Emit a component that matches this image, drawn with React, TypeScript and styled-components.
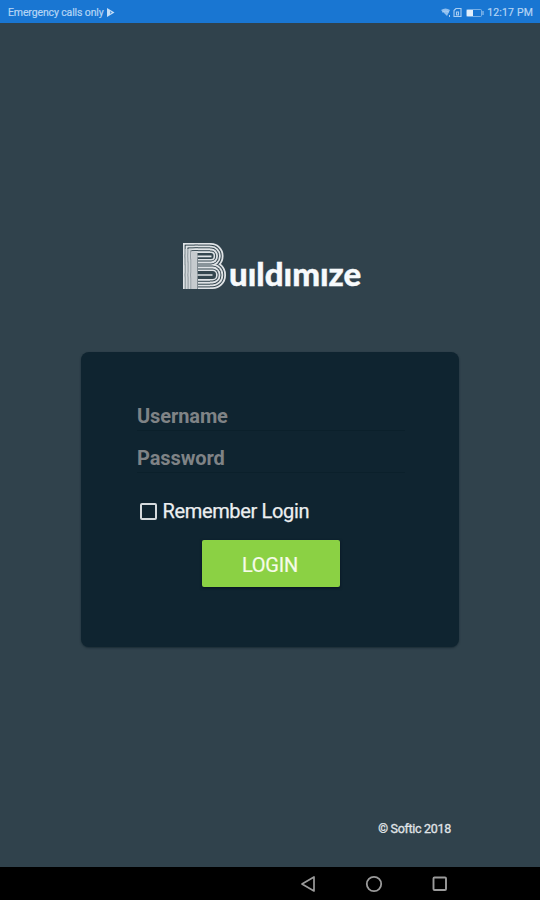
import React, { useState } from 'react';
import styled, { createGlobalStyle } from 'styled-components';

const GlobalStyle = createGlobalStyle`
  * { box-sizing: border-box; }
  body { margin: 0; background: #30424c; font-family: Roboto, sans-serif; }
`;

const Screen = styled.div`
  width: 540px;
  height: 900px;
  display: flex;
  flex-direction: column;
  background: #30424c;
  overflow: hidden;
`;

const StatusBar = styled.header`
  height: 23px;
  flex: none;
  display: flex;
  align-items: center;
  justify-content: space-between;
  padding: 2px 7px 0 8px;
  background: #1976d2;
  color: #b5d5f5;
  font-size: 10.5px;
`;

const StatusGroup = styled.div<{ $gap: number }>`
  display: flex;
  align-items: center;
  gap: ${(p) => p.$gap}px;
  white-space: nowrap;
`;

const StatusText = styled.span<{ $spacing: number }>`
  letter-spacing: ${(p) => p.$spacing}px;
  -webkit-text-stroke: 0.2px currentColor;
`;

const Main = styled.main`
  flex: 1;
  display: flex;
  flex-direction: column;
`;

const Logo = styled.div`
  display: flex;
  align-items: flex-start;
  height: 54px;
  margin: 218px 0 0 181px;
`;

const LogoText = styled.span`
  margin: 12px 0 0 3px;
  font: 900 33px/40px Lato, sans-serif;
  letter-spacing: 0;
  color: #f7fafc;
  -webkit-text-stroke: 0.4px #f7fafc;
`;

const Card = styled.form`
  width: 378px;
  height: 295px;
  margin: 57px 0 0 81px;
  padding: 43px 55px 0 56px;
  display: flex;
  flex-direction: column;
  border-radius: 8px;
  background: #0f2430;
  box-shadow: 0 1px 2px rgba(10, 28, 38, 0.6);
`;

const Field = styled.input`
  width: 268px;
  height: 36px;
  margin-bottom: 6px;
  padding: 8px 0 2px;
  border: 0;
  border-bottom: 1px solid #0b202b;
  outline: 0;
  background: transparent;
  color: #ffffff;
  font: 700 20px/24px Roboto, sans-serif;
  letter-spacing: -0.1px;
  &::placeholder { color: #7f8386; opacity: 1; }
`;

const Remember = styled.label`
  height: 28px;
  margin: 18px 0 0 3px;
  display: flex;
  align-items: center;
  gap: 5.5px;
  color: #eceff0;
  font-size: 20px;
  letter-spacing: -0.35px;
  -webkit-text-stroke: 0.25px currentColor;
`;

const Checkbox = styled.input`
  appearance: none;
  width: 17px;
  height: 17px;
  margin: 0;
  border: 2px solid #d5dadd;
  border-radius: 2px;
  &:checked { background: #8bd144; }
`;

const LoginButton = styled.button`
  width: 138px;
  height: 47px;
  margin: 15px 0 0 65px;
  padding: 3px 2px 0 0;
  border: 0;
  border-radius: 2px;
  background: #8bd144;
  color: #f6fbe9;
  font: 400 20px/24px Roboto, sans-serif;
  letter-spacing: -0.2px;
  -webkit-text-stroke: 0.2px currentColor;
  box-shadow: 0 1px 3px rgba(0, 5, 25, 0.6);
`;

const Copyright = styled.footer`
  margin: auto 89px 29px auto;
  color: #e0e5e8;
  font-size: 12.5px;
  line-height: 18px;
  letter-spacing: -0.3px;
  -webkit-text-stroke: 0.3px currentColor;
`;

const NavBar = styled.nav`
  height: 33px;
  flex: none;
  display: flex;
  align-items: center;
  gap: 48px;
  padding: 1px 0 0 299px;
  background: #000;
  color: #9b9b9b;
`;

const insets = [0, 1.8, 2.8, 4.6, 5.6, 7.4, 8.4, 10];

const BuildMark = () => (
  <svg width="45" height="50" viewBox="0 0 45 50" aria-label="B">
    {insets.map((d, i) => (
      <g key={d} fill={i % 2 ? '#34464f' : '#dfe3e6'}>
        <rect x={2 + d} y={2 + d} width={40.5 - 2 * d} height={26 - 2 * d} rx={Math.max(12.5 - d, 2)} />
        <rect x={2 + d} y={20 + d} width={43 - 2 * d} height={28 - 2 * d} rx={Math.max(13.5 - d, 2)} />
        <rect x={2 + d} y={2 + d} width={15 - d} height={46 - d} />
        <rect x={2 + d} y={2 + d} width={27 - d} height={Math.max(24 - 2 * d, 4)} />
        <rect x="15" y={22 + d} width="14" height={26 - 2 * d} />
      </g>
    ))}
    <path d="M10.5 11h6v37h-6z" fill="#c6cbce" />
    <path d="M3.6 8h7v40h-7z" fill="#c8cdd0" fillOpacity=".6" />
    <path d="M16.5 15.4h14M16.5 34h15" stroke="#dfe3e6" strokeWidth="1.6" />
  </svg>
);

export default function App() {
  const [remember, setRemember] = useState(false);
  return (
    <>
      <GlobalStyle />
      <Screen>
        <StatusBar>
          <StatusGroup $gap={2}>
            <StatusText $spacing={-0.13}>Emergency calls only</StatusText>
            <svg width="9" height="9" viewBox="0 0 9 9">
              <path d="M1 0L8.5 4.5L1 9z" fill="#c5def7" />
              <path d="M4 3l2 1.5L4 6z" fill="#4d94dc" />
            </svg>
          </StatusGroup>
          <StatusGroup $gap={2}>
            <svg width="44" height="12" viewBox="0 0 44 12" fill="none" stroke="#a9cef3">
              <path d="M0 3q4.5-3 9 0L6 9z" fill="#8fbff0" stroke="none" />
              <path d="M1 5q4-2 7 0M8.5 8v2" strokeWidth="1" />
              <path d="M13 3.5L15 1.5h5v8h-7zM15.5 5h2v3h-2z" strokeWidth="1.1" />
              <rect x="25.5" y="2.5" width="15" height="7" rx="1" strokeOpacity=".65" />
              <path d="M26 3h6v6h-6z" fill="#e2effb" stroke="none" />
              <path d="M42 4v4" />
            </svg>
            <StatusText $spacing={0.15}>12:17 PM</StatusText>
          </StatusGroup>
        </StatusBar>
        <Main>
          <Logo>
            <BuildMark />
            <LogoText>uıldımıze</LogoText>
          </Logo>
          <Card onSubmit={(e) => e.preventDefault()}>
            <Field placeholder="Username" />
            <Field placeholder="Password" type="password" />
            <Remember>
              <Checkbox type="checkbox" checked={remember} onChange={(e) => setRemember(e.target.checked)} />
              Remember Login
            </Remember>
            <LoginButton type="submit">LOGIN</LoginButton>
          </Card>
          <Copyright>© Softic 2018</Copyright>
        </Main>
        <NavBar>
          <svg width="18" height="18" viewBox="0 0 18 18" fill="none" stroke="currentColor" strokeWidth="1.7" strokeLinejoin="round">
            <path d="M15 2v14L3 9z" />
          </svg>
          <svg width="18" height="18" viewBox="0 0 18 18" fill="none" stroke="currentColor" strokeWidth="1.8">
            <circle cx="9" cy="9" r="7.2" />
          </svg>
          <svg width="18" height="18" viewBox="0 0 18 18" fill="none" stroke="currentColor" strokeWidth="1.9">
            <rect x="2.5" y="2.5" width="12.5" height="12.5" rx="1" />
          </svg>
        </NavBar>
      </Screen>
    </>
  );
}
